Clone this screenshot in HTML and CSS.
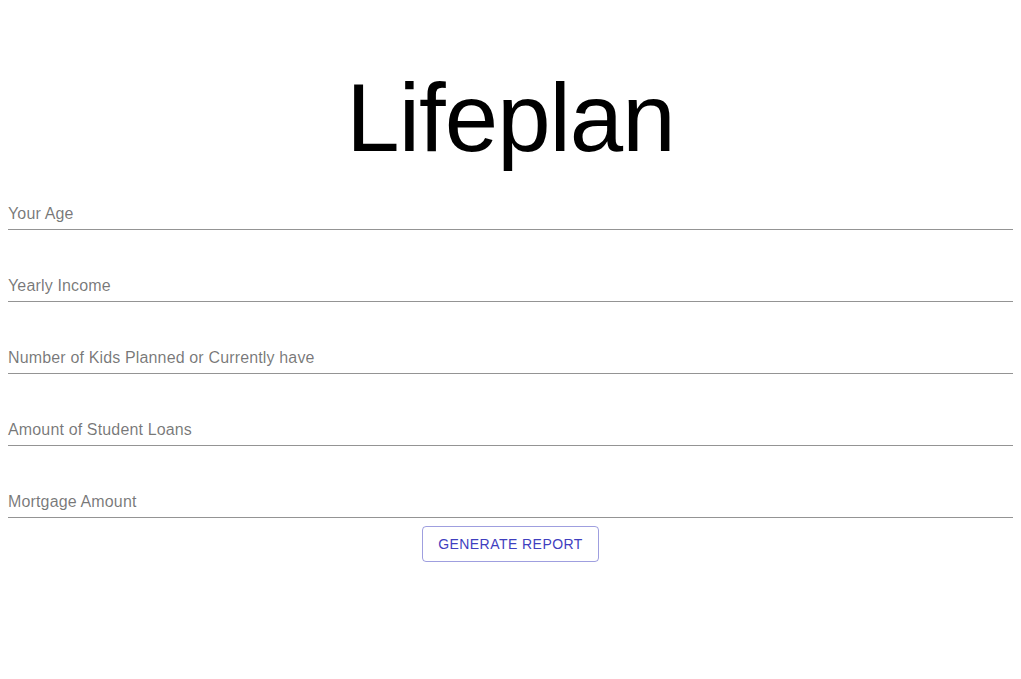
FILE: index.html
```html
<!DOCTYPE html>
<html lang="en">
<head>
<meta charset="utf-8">
<title>Lifeplan</title>
<link rel="stylesheet" href="styles.css">
</head>
<body>
<div class="page">
  <h1 class="title">Lifeplan</h1>
  <form class="form">
    <div class="field"><div class="field-box"><label class="field-label">Your Age</label></div></div>
    <div class="field"><div class="field-box"><label class="field-label">Yearly Income</label></div></div>
    <div class="field"><div class="field-box"><label class="field-label">Number of Kids Planned or Currently have</label></div></div>
    <div class="field"><div class="field-box"><label class="field-label">Amount of Student Loans</label></div></div>
    <div class="field"><div class="field-box"><label class="field-label">Mortgage Amount</label></div></div>
    <div class="actions"><button type="button" class="btn-outline">Generate Report</button></div>
  </form>
</div>
</body>
</html>
```
FILE: styles.css
```css
html, body {
  margin: 0;
  padding: 0;
  background: #ffffff;
}
body {
  font-family: "Liberation Sans", Arial, Helvetica, sans-serif;
  color: #000000;
}
.page {
  padding: 8px;
}
.title {
  margin: 54px 0 0;
  font-size: 96px;
  line-height: 112px;
  font-weight: 300;
  letter-spacing: -1px;
  text-align: center;
  color: #000000;
}
.form {
  display: flex;
  flex-direction: column;
  padding-top: 8px;
}
.field {
  padding-top: 16px;
  margin-bottom: 24px;
}
.field:nth-last-child(2) {
  margin-bottom: 8px;
}
.field-box {
  box-sizing: border-box;
  height: 32px;
  padding: 6px 0 6px;
  border-bottom: 1px solid rgba(0, 0, 0, 0.42);
}
.field-label {
  display: block;
  font-size: 16px;
  line-height: 19px;
  letter-spacing: 0.15px;
  color: rgba(0, 0, 0, 0.54);
}
.actions {
  display: flex;
  justify-content: center;
}
.btn-outline {
  font-family: "Liberation Sans", Arial, Helvetica, sans-serif;
  font-size: 14px;
  font-weight: 500;
  line-height: 24px;
  letter-spacing: 0.45px;
  text-transform: uppercase;
  color: #3f3fbf;
  background: transparent;
  border: 1px solid rgba(63, 63, 191, 0.5);
  border-radius: 4px;
  padding: 5px 15px;
  cursor: pointer;
}
```
